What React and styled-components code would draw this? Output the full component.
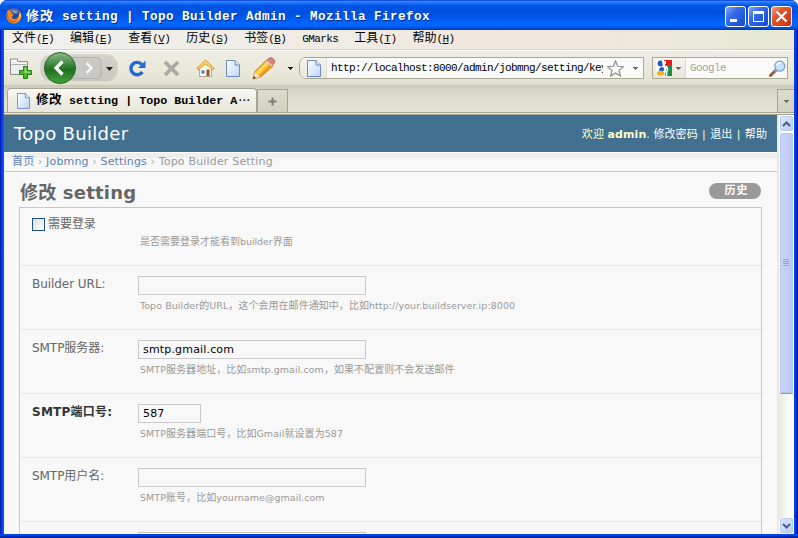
import React from "react";
import styled, { createGlobalStyle, css } from "styled-components";

const cjk = `"Noto Sans CJK SC"`;
const mono = `"Liberation Mono", ${cjk}, monospace`;
const sans = `"DejaVu Sans", ${cjk}, sans-serif`;

const Global = createGlobalStyle`
  * { box-sizing: border-box; }
  body { margin: 0; overflow: hidden; background: #fff; }
`;

const Window = styled.div`
  width: 798px;
  height: 538px;
  display: flex;
  flex-direction: column;
  overflow: hidden;
  border-radius: 7px 7px 0 0;
  background: #0044d8;
`;

const TitleBar = styled.header`
  height: 30px;
  flex: none;
  display: flex;
  align-items: center;
  padding: 2px 6px 0 6px;
  background: linear-gradient(
    #0831d9 0, #2f8cff 1.5px, #1470f8 3px, #0054e3 6px, #0050de 12px,
    #0058ee 18px, #0066ff 23px, #0065fc 26px, #0048cc 28.5px, #0038b0 30px
  );
`;

const WindowTitle = styled.h1`
  flex: 1;
  margin: 1px 0 0 4px;
  display: flex;
  align-items: center;
  height: 20px;
  white-space: pre;
  font: bold 12.6px/20px ${mono};
  color: #fff;
  text-shadow: 1px 1px 0 #0a2a90;
`;

const Run = styled.span`
  white-space: pre;
  font-size: ${(p) => p.$size}px;
  letter-spacing: ${(p) => p.$ls || 0}px;
`;

const WindowButtons = styled.div`
  display: flex;
  gap: 2px;
`;

const WindowButton = styled.button`
  width: 21px;
  height: 21px;
  padding: 0;
  border: 1px solid #fff;
  border-radius: 3px;
  background: ${(p) =>
    p.$close
      ? "linear-gradient(135deg, #f0a088, #e2532a 35%, #d8421a 70%, #b83412)"
      : "linear-gradient(135deg, #86a8f5, #3a6cea 35%, #2458dc 70%, #1a48c8)"};
  svg { display: block; }
`;

const Frame = styled.div`
  flex: 1;
  min-height: 0;
  display: flex;
  flex-direction: column;
  border: solid;
  border-width: 0 4px 4px 4px;
  border-color: transparent;
  background:
    linear-gradient(#ece9d8, #ece9d8) padding-box,
    linear-gradient(90deg, #0010b0 0, #0838e0 1.5px, #0062f8 4px, #0040e0 5px, #0040e0 794px, #0048f0 795px, #0030d8 796px, #000e98 798px) border-box;
`;

const BottomShade = styled.div`
  height: 4px;
  margin-top: -4px;
  flex: none;
  background: linear-gradient(#0050f0, #0038d0 50%, #00128c);
`;

const MenuBar = styled.nav`
  height: 20px;
  flex: none;
  display: flex;
  gap: 16px;
  padding: 0 0 0 8px;
  background: linear-gradient(90deg, #f0f0ea, #f0ebe4 45%, #f1e5df 64%, #ebe8d9 85%, #e7e8d6);
  border-bottom: 1px solid #d6d2c2;
`;

const MenuItem = styled.span`
  display: flex;
  white-space: pre;
  font: 12px/19px ${mono};
  color: #000;
`;

const Toolbar = styled.div`
  height: 35px;
  flex: none;
  display: flex;
  align-items: center;
  padding-left: 5px;
  border-top: 1px solid #fff;
  background: linear-gradient(#eeede4, #e9e7d8 70%, #dfddcd);
`;

const Tool = styled.span`
  display: block;
  flex: none;
  height: ${(p) => p.$h}px;
  width: ${(p) => p.$w}px;
  margin-left: ${(p) => p.$ml || 0}px;
  svg { display: block; }
`;

const Field = styled.div`
  height: 22px;
  flex: none;
  display: flex;
  align-items: center;
  overflow: hidden;
  width: ${(p) => p.$w}px;
  margin-left: ${(p) => p.$ml}px;
  border: 1px solid #a9a996;
  border-radius: ${(p) => (p.$round ? "7px 0 0 7px" : "0")};
  background: #fafaf8;
`;

const FieldBadge = styled.span`
  height: 100%;
  flex: none;
  display: flex;
  align-items: center;
  gap: 4px;
  width: ${(p) => p.$w}px;
  padding-left: ${(p) => p.$pl}px;
  border-right: 1px solid #dcdace;
  background: linear-gradient(#f5f4ee, #e8e6da);
`;

const FieldText = styled.span`
  flex: none;
  overflow: hidden;
  white-space: pre;
  width: ${(p) => p.$w}px;
  margin-left: ${(p) => p.$ml}px;
  font: 11px/22px ${mono};
  letter-spacing: -0.6px;
  color: ${(p) => (p.$muted ? "#a3a392" : "#000")};
`;

const TabStrip = styled.div`
  height: 27px;
  flex: none;
  display: flex;
  align-items: flex-end;
  padding-left: 3px;
  background: linear-gradient(#c9c8b8, #d6d5c5 5px, #e1dfcf 60%, #e4e2d3);
`;

const tabShape = css`
  display: flex;
  align-items: center;
  border: 1px solid #a5a591;
  border-bottom: 0;
`;

const Tab = styled.div`
  ${tabShape}
  width: 250px;
  height: 24px;
  padding-left: 9px;
  gap: 6px;
  border-radius: 4px 4px 0 0;
  background: linear-gradient(#f8f8f4, #eeede4 50%, #e9e8da);
`;

const TabTitle = styled.span`
  display: flex;
  align-items: center;
  height: 20px;
  margin-top: 1px;
  white-space: pre;
  font: bold 12px/20px ${mono};
`;

const TabButton = styled.div`
  ${tabShape}
  justify-content: center;
  height: 23px;
  width: ${(p) => p.$w}px;
  margin-left: ${(p) => (p.$end ? "auto" : 0)};
  border-right-width: ${(p) => (p.$end ? 0 : 1)}px;
  background: linear-gradient(#dddbcc, #d3d1c2);
`;

const TabLine = styled.div`
  height: 3px;
  flex: none;
  background: #ebe9dc;
  border-top: 1px solid #a5a591;
  border-bottom: 1px solid #a5a591;
`;

const Viewport = styled.div`
  flex: 1;
  min-height: 0;
  display: flex;
  overflow: hidden;
`;

const Page = styled.main`
  width: 773px;
  flex: none;
  overflow: hidden;
  background: #f8f8f8;
  font-family: ${sans};
`;

const SiteHeader = styled.div`
  height: 37px;
  display: flex;
  align-items: center;
  justify-content: space-between;
  padding: 0 10px 0 10px;
  background: #417090;
`;

const SiteName = styled.div`
  font-size: 18px;
  line-height: 36px;
  letter-spacing: 0.3px;
  color: #fff;
`;

const UserTools = styled.div`
  display: flex;
  white-space: pre;
  height: 20px;
  padding-top: 1px;
  font-size: 11px;
  line-height: 20px;
  letter-spacing: 0.07px;
  color: #ffc;
`;

const UserLink = styled.a`
  color: #fff;
`;

const Divider = styled.span`
  width: 12.5px;
  text-align: center;
`;

const Breadcrumbs = styled.div`
  height: 20px;
  padding: 0 8px;
  display: flex;
  white-space: pre;
  font-size: 11px;
  line-height: 18px;
  letter-spacing: 0.18px;
  color: #999;
  border-top: 1px solid #fff;
  border-bottom: 1px solid #c9c9c9;
  background: linear-gradient(#eeeeee 5px, #f8f8f8 5px);
`;

const Crumb = styled.a`
  color: #5b80b2;
`;

const Sep = styled.span`
  width: 11.7px;
  text-align: center;
  color: #aaa;
`;

const Heading = styled.div`
  height: 35px;
  display: flex;
  align-items: flex-start;
  justify-content: space-between;
  padding: 10px 16px 0 16px;
`;

const PageTitle = styled.h2`
  margin: 0;
  white-space: pre;
  font-size: 18px;
  line-height: 22px;
  height: 22px;
  letter-spacing: 0.2px;
  color: #666;
`;

const HistoryLink = styled.a`
  width: 52px;
  height: 16px;
  margin-top: 1px;
  padding-left: 3px;
  border-radius: 8px;
  text-align: center;
  background: #999;
  color: #fff;
  font-weight: bold;
  font-size: 11px;
  line-height: 16px;
  letter-spacing: 1px;
`;

const Module = styled.section`
  width: 743px;
  margin-left: 15px;
  border: 1px solid #c8c8c8;
`;

const FormRow = styled.div`
  height: ${(p) => p.$h || 64}px;
  display: grid;
  grid-template-columns: 106px 1fr;
  grid-template-rows: ${(p) => p.$first || 19}px auto;
  padding: ${(p) => p.$pt || 10}px 0 0 12px;
  border-bottom: 1px solid #e6e6e6;
`;

const Label = styled.label`
  height: 16px;
  white-space: nowrap;
  font-size: 12px;
  line-height: 16px;
  letter-spacing: ${(p) => (p.$bold ? 0.25 : -0.05)}px;
  font-weight: ${(p) => (p.$bold ? "bold" : "normal")};
  color: ${(p) => (p.$bold ? "#333" : "#666")};
`;

const CheckLabel = styled(Label)`
  grid-column: 1 / 3;
  display: flex;
  gap: 3px;
`;

const CheckBox = styled.span`
  width: 13px;
  height: 13px;
  margin-top: 2px;
  border: 1px solid #1c5180;
  background: linear-gradient(135deg, #dcdcd7, #fff);
`;

const TextBox = styled.div`
  width: ${(p) => p.$w || 228}px;
  height: 19px;
  padding-left: 4px;
  border: 1px solid #c8c8c8;
  font-size: 11px;
  line-height: 17px;
  letter-spacing: 0.17px;
  color: #000;
`;

const Help = styled.p`
  grid-column: 2;
  margin: 0;
  padding: 4px 0 0 2px;
  height: 18px;
  white-space: nowrap;
  font-size: 10px;
  line-height: 14px;
  color: #999;
`;

const ScrollBar = styled.div`
  width: 17px;
  flex: none;
  display: flex;
  flex-direction: column;
  align-items: center;
  padding-left: 1px;
  background: linear-gradient(90deg, #e8e8e0, #f0f0ea 6px, #f8f8f6 10px, #fcfcfb);
`;

const ScrollButton = styled.div`
  width: 15px;
  height: 17px;
  flex: none;
  display: flex;
  align-items: center;
  justify-content: center;
  border: 1px solid #fff;
  border-radius: 3px;
  background: linear-gradient(135deg, #e0e8fe, #b8cbf8);
  box-shadow: inset 0 0 0 1px #b4c8f4;
`;

const ScrollThumb = styled.div`
  width: 15px;
  height: 262px;
  flex: none;
  display: flex;
  align-items: center;
  justify-content: center;
  border: 1px solid #fff;
  border-bottom-color: #7d9bd3;
  border-radius: 3px;
  background: linear-gradient(90deg, #cad3fa, #c0cff9 60%, #b4c6f5);
  box-shadow: inset 0 0 0 1px #b4c6f4;
`;

const ScrollTrack = styled.div`
  flex: 1;
`;

const Caret = ({ c = "#6b6b5e" }) => (
  <svg width="5" height="3" shapeRendering="crispEdges"><path d="M0 0h5v1H4v1H3v1H2V2H1V1H0z" fill={c} /></svg>
);

const PageIcon = ({ w = 14, h = 17 }) => (
  <svg width={w} height={h} viewBox="0 0 14 17">
    <defs>
      <linearGradient id="pg" x1="0" y1="0" x2="1" y2="1">
        <stop offset="0" stopColor="#fff" /><stop offset="1" stopColor="#bcd4f6" />
      </linearGradient>
    </defs>
    <path d="M.5.5h8.500l4.500 4.500v11.500H.5z" fill="url(#pg)" stroke="#6e8bc0" />
    <path d="M9 .5v4.500h4.500" fill="#dceafc" stroke="#6e8bc0" />
  </svg>
);

const FirefoxIcon = () => (
  <svg width="16" height="16" viewBox="0 0 16 16">
    <circle cx="8" cy="8" r="7.500" fill="#e0641a" />
    <circle cx="8.400" cy="6.600" r="5.200" fill="#24489c" />
    <path d="M6 2.500Q9 1 12 4q-1 2-3 1.500Q7 5 6 2.500z" fill="#6fa6dd" />
    <path d="M1 4.500L2 1.500l2 2 2.800.3-1.300 2 2.500.8-2 2 .5 2q2.500 1.500 5-.5 2-2 1.300-6l1.800 2Q16 12 11 14.800q-4 1.500-7.500-.8Q-.5 11 1 4.500z" fill="#f08a22" />
    <path d="M2 5q-1 5 2.500 7.500Q8 14 11 12q-2 3-6 1.800Q.5 11 1.300 6z" fill="#c94312" />
    <path d="M14.800 5q.8 4-1.800 7.500 1-3.500.4-6z" fill="#ffdc50" />
  </svg>
);

const NewTabIcon = () => (
  <svg width="24" height="23" viewBox="0 0 24 23">
    <path d="M1.500 17.500v-15.500h7v2.500h10v13z" fill="#eceeee" stroke="#8b9093" />
    <path d="M2.500 7.500h15" stroke="#a9adaf" />
    <path d="M3 3.500h4.500v2.500h9.500" fill="none" stroke="#fff" />
    <path d="M14.500 9.500h4v4h4v4h-4v4h-4v-4h-4v-4h4z" fill="#4bb52e" stroke="#218014" />
    <path d="M15.500 10.500h2v4h4v1.500h-6z" fill="#8ddc66" />
  </svg>
);

const NavIcon = () => (
  <svg width="78" height="34" viewBox="0 0 78 34">
    <defs>
      <linearGradient id="gr" x1="0" y1="0" x2="0" y2="1">
        <stop offset="0" stopColor="#8fb98b" /><stop offset=".4" stopColor="#3c873a" />
        <stop offset=".55" stopColor="#1f7020" /><stop offset="1" stopColor="#46a53b" />
      </linearGradient>
      <linearGradient id="pill" x1="0" y1="0" x2="0" y2="1">
        <stop offset="0" stopColor="#d3d3cc" /><stop offset="1" stopColor="#c8c8c1" />
      </linearGradient>
    </defs>
    <rect x=".5" y="3.500" width="77" height="27" rx="11" fill="url(#pill)" stroke="#d9d8cf" />
    <path d="M30 6.500h26q5 0 5 5v11q0 5-5 5H30z" fill="#c8c8c4" stroke="#b2b2ad" />
    <circle cx="20" cy="17" r="15.500" fill="url(#gr)" stroke="#2b652b" />
    <path d="M22.500 10.500l-6.500 6.500 6.500 6.500" fill="none" stroke="#fff" strokeWidth="3.200" />
    <path d="M46.500 12l5 5-5 5" fill="none" stroke="#f4f4f2" strokeWidth="2.600" />
    <path d="M66 16h7l-3.500 4z" fill="#222" />
  </svg>
);

const ReloadIcon = () => (
  <svg width="17" height="17" viewBox="0 0 17 17">
    <path d="M13.300 12a6.200 6.200 0 1 1-.5-7.500" fill="none" stroke="#2468d2" strokeWidth="3.400" />
    <path d="M16.500.5v7.500H9z" fill="#2468d2" />
  </svg>
);

const StopIcon = () => (
  <svg width="17" height="17" viewBox="0 0 17 17">
    <path d="M2 2l13 13M15 2L2 15" stroke="#a9a9a6" strokeWidth="3.800" />
  </svg>
);

const HomeIcon = () => (
  <svg width="19" height="18" viewBox="0 0 19 18">
    <path d="M3.500 8v9.500h12V8l-6-5z" fill="#fbf8ef" stroke="#b0a898" />
    <path d="M9.500 1L.8 9.500l1.500 1.200 7.200-6 7.200 6 1.500-1.200z" fill="#fcd873" stroke="#d0962a" />
    <path d="M5.500 11.500h3v3h-3z" fill="#4773b5" />
    <path d="M10.500 10.500h3V17h-3z" fill="#9a5523" />
  </svg>
);

const PencilIcon = () => (
  <svg width="24" height="23" viewBox="0 0 24 23">
    <path d="M1 22l2-7.500L14.500 3l6.500 6L8.500 20z" fill="#ffc12e" stroke="#a86a14" strokeWidth=".8" />
    <path d="M5 16.500L16 5" stroke="#ffe27a" strokeWidth="1.800" />
    <path d="M8 19L19.800 7.800" stroke="#ee9418" strokeWidth="2" />
    <path d="M14.500 3.500l2-2Q19-.5 21.500 2q2.500 2 .5 4.500l-2 2z" fill="#d98278" stroke="#b45e58" strokeWidth=".8" />
    <path d="M13.800 4.500l5.700 5 1.300-1.200-5.700-5z" fill="#c6cbd3" />
    <path d="M1 22l2-7 5 5z" fill="#f8dfb2" /><path d="M1 22l.8-3 2 2z" fill="#333" />
  </svg>
);

const StarIcon = () => (
  <svg width="17" height="17" viewBox="0 0 17 17">
    <path d="M8.500 1l2.200 5.300 5.700.4-4.400 3.700 1.400 5.600-4.900-3-4.900 3L5 10.400.6 6.700l5.700-.4z" fill="#fbfbf9" stroke="#8f8f8b" strokeWidth="1.200" />
  </svg>
);

const GoogleIcon = () => (
  <svg width="16" height="16" viewBox="0 0 16 16">
    <path d="M8 0h8v5H8z" fill="#e11d17" /><path d="M9 5h7v11H9z" fill="#17914a" />
    <path d="M0 0h5l6 8-3 8H0z" fill="#fff" />
    <circle cx="4.500" cy="3.500" r="2.900" fill="#2358c4" />
    <path d="M6 1h4v2.500l-3 3z" fill="#fff" />
    <path d="M4 8q2-2 4 .2 1 2-1 3H4q-2-1 0-3.200z" fill="#2358c4" />
    <ellipse cx="4.500" cy="13.300" rx="3.800" ry="2.500" fill="#f6b321" />
    <path d="M10 6q2 1.500 1.500 4.500L10 12q1.500 2 0 4" fill="none" stroke="#fff" strokeWidth="1.500" />
  </svg>
);

const SearchIcon = () => (
  <svg width="17" height="17" viewBox="0 0 17 17">
    <path d="M6.500 10.500L1.500 15.500" stroke="#985b35" strokeWidth="3" strokeLinecap="round" />
    <path d="M7.500 9.500l-2 2" stroke="#8d949f" strokeWidth="2.500" />
    <circle cx="10.800" cy="6.200" r="5" fill="#c5e0fa" stroke="#7c9fd2" strokeWidth="1.300" />
    <path d="M7.500 6a3.500 3.500 0 0 1 4-3.200" fill="none" stroke="#fff" strokeWidth="1.500" />
  </svg>
);

const Chevron = ({ up }) => (
  <svg width="9" height="6" viewBox="0 0 9 6">
    <path d={up ? "M1 5l3.500-3.500L8 5" : "M1 1l3.500 3.500L8 1"} fill="none" stroke="#44608c" strokeWidth="2" />
  </svg>
);

const Mixed = ({ text, latin, han, latinLs, hanLs }) =>
  text.split(/([\u3000-\u9fff\uff00-\uffef]+)/).filter(Boolean).map((s, i) => {
    const isHan = /[\u3000-\u9fff\uff00-\uffef]/.test(s);
    return <Run key={i} $size={isHan ? han : latin} $ls={isHan ? hanLs : latinLs}>{s}</Run>;
  });

const menus = [["文件", "F"], ["编辑", "E"], ["查看", "V"], ["历史", "S"], ["书签", "B"], ["GMarks"], ["工具", "T"], ["帮助", "H"]];

const rows = [
  { label: "Builder URL:", value: "", help: "Topo Builder的URL，这个会用在邮件通知中，比如http://your.buildserver.ip:8000" },
  { label: "SMTP服务器:", value: "smtp.gmail.com", help: "SMTP服务器地址，比如smtp.gmail.com，如果不配置则不会发送邮件" },
  { label: "SMTP端口号:", value: "587", bold: true, width: 63, help: "SMTP服务器端口号，比如Gmail就设置为587" },
  { label: "SMTP用户名:", value: "", help: "SMTP账号，比如yourname@gmail.com" },
  { label: "", value: "", help: "" },
];

export default function App() {
  return (
    <Window>
      <Global />
      <TitleBar>
        <FirefoxIcon />
        <WindowTitle>
          <Mixed text="修改 setting | Topo Builder Admin - Mozilla Firefox" latin={12.6} latinLs={0.44} han={13} hanLs={1} />
        </WindowTitle>
        <WindowButtons>
          <WindowButton aria-label="Minimize"><svg width="19" height="19"><path d="M4 12h7v3H4z" fill="#fff" /></svg></WindowButton>
          <WindowButton aria-label="Maximize"><svg width="19" height="19"><path d="M4 4h11v11H4zM5 7v7h9V7z" fill="#fff" fillRule="evenodd" /></svg></WindowButton>
          <WindowButton aria-label="Close" $close><svg width="19" height="19"><path d="M4.500 4.500l10 10m0-10l-10 10" stroke="#fff" strokeWidth="2.200" /></svg></WindowButton>
        </WindowButtons>
      </TitleBar>
      <Frame>
        <MenuBar>
          {menus.map(([name, key]) => (
            <MenuItem key={name}>
              <Mixed text={name} han={12} latin={11} latinLs={-0.6} />
              {key && <Run $size={11} $ls={-0.6}>(<u>{key}</u>)</Run>}
            </MenuItem>
          ))}
        </MenuBar>
        <Toolbar>
          <Tool $w={24} $h={23}><NewTabIcon /></Tool>
          <Tool $w={78} $h={34} $ml={7}><NavIcon /></Tool>
          <Tool $w={17} $h={17} $ml={11}><ReloadIcon /></Tool>
          <Tool $w={17} $h={17} $ml={17}><StopIcon /></Tool>
          <Tool $w={19} $h={18} $ml={16}><HomeIcon /></Tool>
          <Tool $w={14} $h={17} $ml={11}><PageIcon /></Tool>
          <Tool $w={24} $h={23} $ml={12}><PencilIcon /></Tool>
          <Tool $w={5} $h={3} $ml={12}><Caret c="#222" /></Tool>
          <Field $w={345} $ml={6} $round>
            <FieldBadge $w={27} $pl={7}><PageIcon /></FieldBadge>
            <FieldText $w={272} $ml={4}>http://localhost:8000/admin/jobmng/setting/key</FieldText>
            <Tool $w={17} $h={17} $ml={4}><StarIcon /></Tool>
            <Tool $w={5} $h={3} $ml={9}><Caret /></Tool>
          </Field>
          <Field $w={136} $ml={8}>
            <FieldBadge $w={33} $pl={3}><GoogleIcon /><Caret /></FieldBadge>
            <FieldText $w={72} $ml={4} $muted>Google</FieldText>
            <Tool $w={17} $h={17} $ml={7}><SearchIcon /></Tool>
          </Field>
        </Toolbar>
        <TabStrip>
          <Tab>
            <PageIcon w={13} h={16} />
            <TabTitle>
              <Mixed text="修改 setting | Topo Builder A" latin={11.7} latinLs={0} han={12.5} hanLs={0.5} />
              <Run $size={10} $ls={-2}>···</Run>
            </TabTitle>
          </Tab>
          <TabButton $w={31}><svg width="9" height="9"><path d="M4.500 .5v8M.5 4.500h8" stroke="#7e7e77" strokeWidth="2" /></svg></TabButton>
          <TabButton $w={17} $end><Caret /></TabButton>
        </TabStrip>
        <TabLine />
        <Viewport>
          <Page>
            <SiteHeader>
              <SiteName>Topo Builder</SiteName>
              <UserTools>
                欢迎 <b>admin</b>. <UserLink>修改密码</UserLink>
                <Divider>|</Divider><UserLink>退出</UserLink>
                <Divider>|</Divider><UserLink>帮助</UserLink>
              </UserTools>
            </SiteHeader>
            <Breadcrumbs>
              <Crumb>首页</Crumb><Sep>›</Sep><Crumb>Jobmng</Crumb><Sep>›</Sep><Crumb>Settings</Crumb><Sep>›</Sep>Topo Builder Setting
            </Breadcrumbs>
            <Heading>
              <PageTitle>修改 setting</PageTitle>
              <HistoryLink>历史</HistoryLink>
            </Heading>
            <Module>
              <FormRow $h={58} $pt={8} $first={15}>
                <CheckLabel><CheckBox />需要登录</CheckLabel>
                <Help><Mixed text="是否需要登录才能看到builder界面" latin={9.4} han={10} /></Help>
              </FormRow>
              {rows.map((r, i) => (
                <FormRow key={i}>
                  <Label $bold={r.bold}>{r.label}</Label>
                  <TextBox $w={r.width}>{r.value}</TextBox>
                  <Help><Mixed text={r.help} latin={9.5} latinLs={0.06} han={10} hanLs={0.05} /></Help>
                </FormRow>
              ))}
            </Module>
          </Page>
          <ScrollBar>
            <ScrollButton><Chevron up /></ScrollButton>
            <ScrollThumb><svg width="7" height="8" shapeRendering="crispEdges"><path d="M0 .5h6M0 2.500h6M0 4.500h6M0 6.500h6" stroke="#8aa5e6" /></svg></ScrollThumb>
            <ScrollTrack />
            <ScrollButton><Chevron /></ScrollButton>
          </ScrollBar>
        </Viewport>
      </Frame>
      <BottomShade />
    </Window>
  );
}
